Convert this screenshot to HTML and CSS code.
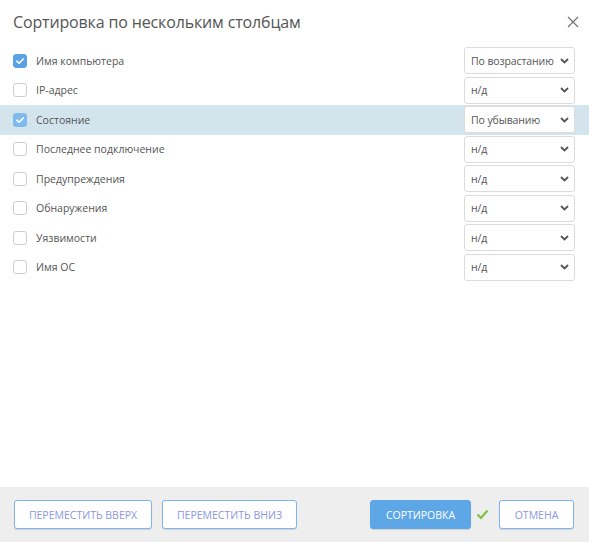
FILE: index.html
```html
<!DOCTYPE html>
<html lang="ru">
<head>
<meta charset="utf-8">
<title>Сортировка</title>
<link rel="stylesheet" href="styles.css">
</head>
<body>
<div class="dialog">
  <div class="header">
    <h1 class="title">Сортировка по нескольким столбцам</h1>
    <button class="close" aria-label="Закрыть">
      <svg width="12" height="12" viewBox="0 0 12 12"><path d="M1 1 L11 11 M11 1 L1 11" stroke="#6f6f6f" stroke-width="1.1" fill="none"/></svg>
    </button>
  </div>
  <div class="rows">
    <div class="row">
      <span class="cb checked"><svg width="14" height="14" viewBox="0 0 14 14"><path d="M3.3 7.2 L5.9 9.7 L10.8 4.6" stroke="#fff" stroke-width="1.8" fill="none" stroke-linecap="round" stroke-linejoin="round"/></svg></span>
      <span class="label">Имя компьютера</span>
      <div class="select"><span>По возрастанию</span><svg class="chev" width="9" height="6" viewBox="0 0 9 6"><path d="M1 1 L4.5 4.5 L8 1" stroke="#555" stroke-width="1.8" fill="none"/></svg></div>
    </div>
    <div class="row">
      <span class="cb"></span>
      <span class="label">IP-адрес</span>
      <div class="select"><span>н/д</span><svg class="chev" width="9" height="6" viewBox="0 0 9 6"><path d="M1 1 L4.5 4.5 L8 1" stroke="#555" stroke-width="1.8" fill="none"/></svg></div>
    </div>
    <div class="row selected">
      <span class="cb checked"><svg width="14" height="14" viewBox="0 0 14 14"><path d="M3.3 7.2 L5.9 9.7 L10.8 4.6" stroke="#fff" stroke-width="1.8" fill="none" stroke-linecap="round" stroke-linejoin="round"/></svg></span>
      <span class="label">Состояние</span>
      <div class="select"><span>По убыванию</span><svg class="chev" width="9" height="6" viewBox="0 0 9 6"><path d="M1 1 L4.5 4.5 L8 1" stroke="#555" stroke-width="1.8" fill="none"/></svg></div>
    </div>
    <div class="row">
      <span class="cb"></span>
      <span class="label">Последнее подключение</span>
      <div class="select"><span>н/д</span><svg class="chev" width="9" height="6" viewBox="0 0 9 6"><path d="M1 1 L4.5 4.5 L8 1" stroke="#555" stroke-width="1.8" fill="none"/></svg></div>
    </div>
    <div class="row">
      <span class="cb"></span>
      <span class="label">Предупреждения</span>
      <div class="select"><span>н/д</span><svg class="chev" width="9" height="6" viewBox="0 0 9 6"><path d="M1 1 L4.5 4.5 L8 1" stroke="#555" stroke-width="1.8" fill="none"/></svg></div>
    </div>
    <div class="row">
      <span class="cb"></span>
      <span class="label">Обнаружения</span>
      <div class="select"><span>н/д</span><svg class="chev" width="9" height="6" viewBox="0 0 9 6"><path d="M1 1 L4.5 4.5 L8 1" stroke="#555" stroke-width="1.8" fill="none"/></svg></div>
    </div>
    <div class="row">
      <span class="cb"></span>
      <span class="label">Уязвимости</span>
      <div class="select"><span>н/д</span><svg class="chev" width="9" height="6" viewBox="0 0 9 6"><path d="M1 1 L4.5 4.5 L8 1" stroke="#555" stroke-width="1.8" fill="none"/></svg></div>
    </div>
    <div class="row">
      <span class="cb"></span>
      <span class="label">Имя ОС</span>
      <div class="select"><span>н/д</span><svg class="chev" width="9" height="6" viewBox="0 0 9 6"><path d="M1 1 L4.5 4.5 L8 1" stroke="#555" stroke-width="1.8" fill="none"/></svg></div>
    </div>
  </div>
  <div class="footer">
    <button class="btn btn-up">ПЕРЕМЕСТИТЬ ВВЕРХ</button>
    <button class="btn btn-down">ПЕРЕМЕСТИТЬ ВНИЗ</button>
    <div class="spacer"></div>
    <button class="btn btn-primary">СОРТИРОВКА</button>
    <svg class="ok" width="13" height="11" viewBox="0 0 13 11"><path d="M1.5 5.5 L5 9 L11.5 1.5" stroke="#7cc142" stroke-width="2.2" fill="none"/></svg>
    <button class="btn btn-cancel">ОТМЕНА</button>
  </div>
</div>
</body>
</html>
```
FILE: styles.css
```css
* { box-sizing: border-box; }
html, body {
  margin: 0;
  padding: 0;
  height: 100%;
  background: #fff;
}
body {
  font-family: "Open Sans", "Noto Sans", sans-serif;
  color: #555;
}
.dialog {
  display: flex;
  flex-direction: column;
  height: 100vh;
}
.header {
  display: flex;
  align-items: center;
  justify-content: space-between;
  height: 46px;
  padding: 0 9px 2px 13px;
}
.title {
  margin: 0;
  font-size: 16px;
  font-weight: 400;
  color: #555;
  letter-spacing: -0.15px;
}
.close {
  border: 0;
  background: none;
  padding: 0;
  width: 14px;
  height: 14px;
  display: flex;
  align-items: center;
  justify-content: center;
}
.rows {
  flex: 1;
}
.row {
  display: flex;
  align-items: center;
  height: 29.5px;
  padding: 0 14px 0 13px;
}
.row.selected {
  background: #d4e4ec;
}
.cb {
  width: 14px;
  height: 14px;
  border: 1px solid #cfcfcf;
  border-radius: 3px;
  background: #fff;
  display: flex;
  align-items: center;
  justify-content: center;
  flex: none;
}
.cb.checked {
  background: #5aa2e6;
  border-color: #5aa2e6;
}
.row.selected .cb.checked {
  background: #7fbbef;
  border-color: #7fbbef;
}
.cb svg { display: block; }
.label {
  margin-left: 9px;
  font-size: 10.5px;
  color: #555;
  flex: 1;
}
.select {
  width: 111px;
  height: 27px;
  border: 1px solid #dcdcdc;
  border-radius: 3px;
  background: #fff;
  display: flex;
  align-items: center;
  justify-content: space-between;
  padding: 0 5px 0 6px;
  font-size: 10.5px;
  letter-spacing: -0.1px;
  color: #555;
}
.chev { display: block; flex: none; }
.footer {
  display: flex;
  align-items: center;
  height: 55px;
  background: #eeeeee;
  padding: 0 15px 0 14px;
}
.spacer { flex: 1; }
.btn {
  height: 29px;
  border: 1px solid #7db5ec;
  border-radius: 3px;
  background: #fff;
  color: #8b97e0;
  font-family: "Open Sans", "Noto Sans", sans-serif;
  font-size: 10.5px;
  padding: 0;
  box-shadow: 0 1px 1px rgba(0,0,0,0.12);
}
.btn-up { width: 138px; }
.btn-down { width: 135px; margin-left: 10px; }
.btn-primary {
  width: 101px;
  background: #5ea7e7;
  border-color: #5ea7e7;
  color: #fff;
}
.ok { margin: 0 10px 0 5px; display: block; }
.btn-cancel { width: 75px; }
```
